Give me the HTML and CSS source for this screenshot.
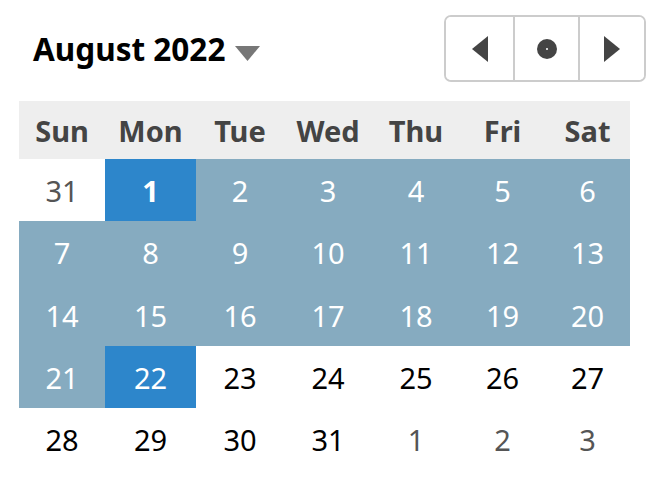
FILE: index.html
```html
<!DOCTYPE html>
<html lang="en">
<head>
  <meta charset="UTF-8">
  <title>Date Picker</title>
  <link rel="stylesheet" href="styles.css">
</head>
<body>
  <div class="picker">
    <div class="picker-head">
      <button class="month-title" type="button">
        August 2022
        <svg class="caret" width="25" height="15" viewBox="0 0 25 15"><polygon points="0,0 25,0 12.5,15" fill="#777"/></svg>
      </button>
      <div class="nav">
        <button type="button" class="nav-btn prev" title="Previous month">
          <svg width="18" height="26" viewBox="0 0 18 26"><polygon points="17,0 17,26 1,13" fill="#444"/></svg>
        </button>
        <button type="button" class="nav-btn today" title="Today">
          <svg width="22" height="22" viewBox="0 0 22 22"><circle cx="11" cy="11" r="10" fill="#444"/><circle cx="11" cy="11" r="1" fill="#fff"/></svg>
        </button>
        <button type="button" class="nav-btn next" title="Next month">
          <svg width="18" height="26" viewBox="0 0 18 26"><polygon points="1,0 1,26 17,13" fill="#444"/></svg>
        </button>
      </div>
    </div>

    <table class="days">
      <colgroup>
        <col class="c-sun"><col class="c-mon"><col class="c-tue"><col class="c-wed"><col class="c-thu"><col class="c-fri"><col class="c-sat">
      </colgroup>
      <thead>
        <tr>
          <th>Sun</th><th>Mon</th><th>Tue</th><th>Wed</th><th>Thu</th><th>Fri</th><th>Sat</th>
        </tr>
      </thead>
      <tbody>
        <tr>
          <td class="other">31</td><td class="picked bold">1</td><td class="range">2</td><td class="range">3</td><td class="range">4</td><td class="range">5</td><td class="range">6</td>
        </tr>
        <tr class="tall">
          <td class="range">7</td><td class="range">8</td><td class="range">9</td><td class="range">10</td><td class="range">11</td><td class="range">12</td><td class="range">13</td>
        </tr>
        <tr>
          <td class="range">14</td><td class="range">15</td><td class="range">16</td><td class="range">17</td><td class="range">18</td><td class="range">19</td><td class="range">20</td>
        </tr>
        <tr>
          <td class="range">21</td><td class="picked">22</td><td>23</td><td>24</td><td>25</td><td>26</td><td>27</td>
        </tr>
        <tr>
          <td>28</td><td>29</td><td>30</td><td>31</td><td class="other">1</td><td class="other">2</td><td class="other">3</td>
        </tr>
      </tbody>
    </table>
  </div>
</body>
</html>
```

FILE: styles.css
```css
body {
  margin: 0;
  font-family: 'Noto Sans', 'Open Sans', sans-serif;
  background: #fff;
  color: #000;
}

.picker {
  width: 651px;
  padding-top: 15px;
}

.picker-head {
  display: flex;
  justify-content: space-between;
  align-items: center;
  height: 67px;
  margin: 0 5px 19px 33px;
}

.month-title {
  display: flex;
  align-items: baseline;
  gap: 10px;
  padding: 0;
  border: none;
  background: none;
  font-family: inherit;
  font-size: 31.5px;
  font-weight: bold;
  color: #000;
  cursor: pointer;
}

.nav {
  display: flex;
  height: 67px;
  box-sizing: border-box;
  border: 2px solid #ccc;
  border-radius: 7px;
  overflow: hidden;
}

.nav-btn {
  display: flex;
  align-items: center;
  justify-content: center;
  height: 100%;
  padding: 0;
  border: none;
  background: #fff;
  cursor: pointer;
}

.nav-btn.prev { width: 67px; }
.nav-btn.today { width: 65px; }
.nav-btn.next { width: 66px; }

.nav-btn + .nav-btn {
  border-left: 2px solid #ccc;
}

.days {
  margin-left: 19px;
  width: 611px;
  table-layout: fixed;
  border-collapse: collapse;
}

.c-sun { width: 86px; }
.c-mon { width: 91px; }
.c-tue, .c-wed, .c-thu { width: 88px; }
.c-fri, .c-sat { width: 85px; }

.days th {
  height: 58px;
  padding: 0;
  background: #eeeeee;
  color: #444;
  font-size: 29px;
  font-weight: bold;
}

.days td {
  height: 62px;
  padding: 0;
  text-align: center;
  font-size: 29px;
  color: #000;
}

.days tr.tall td {
  height: 63px;
}

.days td.other {
  color: #555;
}

.days td.range {
  background: #86abc0;
  color: #fff;
}

.days td.picked {
  background: #2d86cb;
  color: #fff;
}

.days td.bold {
  font-weight: bold;
}
```
